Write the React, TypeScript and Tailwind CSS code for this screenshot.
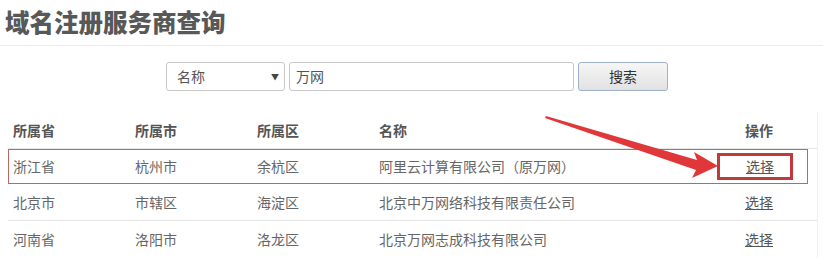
import React from "react";

const rows = [
  ["浙江省", "杭州市", "余杭区", "阿里云计算有限公司（原万网）"],
  ["北京市", "市辖区", "海淀区", "北京中万网络科技有限责任公司"],
  ["河南省", "洛阳市", "洛龙区", "北京万网志成科技有限公司"],
];

export default function App() {
  return (
    <div
      className="relative w-[823px] h-[273px] overflow-hidden bg-white text-[#555]"
      style={{ fontFamily: '"Noto Sans CJK SC", "Microsoft YaHei", sans-serif' }}
    >
      <div className="h-[46px] border-b border-[#ebebeb] pl-[5px] pt-[4px]">
        <h1 className="text-[24.5px] leading-[36px] font-black text-[#585858]">域名注册服务商查询</h1>
      </div>

      <div className="flex items-center pl-[166px] pt-[16px] gap-[4px]">
        <div className="flex h-[29px] w-[119px] items-center justify-between rounded-[3px] border border-[#c8c8c8] pl-[10px] pr-[5px] text-[14px] text-[#555]">
          <span>名称</span>
          <span className="text-[8px] text-[#444]">▼</span>
        </div>
        <div className="flex h-[29px] w-[285px] items-center rounded-[3px] border border-[#c8c8c8] pl-[6px] text-[14px] text-[#555]">
          万网
        </div>
        <div className="flex h-[29px] w-[90px] items-center justify-center rounded-[3px] border border-[#9fb1c9] bg-gradient-to-b from-[#f6f6f6] to-[#e2e2e2] text-[14px] text-[#333]">
          搜索
        </div>
      </div>

      <div className="mt-[21px] ml-[8px] w-[810px] border-r border-[#f0f0f0] text-[14px]">
        <div className="grid h-[37px] grid-cols-[122px_122px_122px_366px_1fr] items-center border-b border-[#e6e6e6] font-bold text-[#555]">
          <div className="pl-[5px]">所属省</div>
          <div className="pl-[5px]">所属市</div>
          <div className="pl-[5px]">所属区</div>
          <div className="pl-[5px]">名称</div>
          <div className="pl-[5px]">操作</div>
        </div>
        {rows.map((r, i) => (
          <div
            key={i}
            className={
              i === 0
                ? "grid h-[35px] w-[800px] grid-cols-[122px_122px_122px_366px_1fr] items-center border border-[#b86a62] text-[#666]"
                : "grid h-[37px] grid-cols-[122px_122px_122px_366px_1fr] items-center border-b border-[#e6e6e6] text-[#666] last:border-b-0"
            }
          >
            <div className={i === 0 ? "pl-[4px]" : "pl-[5px]"}>{r[0]}</div>
            <div className={i === 0 ? "pl-[4px]" : "pl-[5px]"}>{r[1]}</div>
            <div className={i === 0 ? "pl-[4px]" : "pl-[5px]"}>{r[2]}</div>
            <div className={i === 0 ? "pl-[4px]" : "pl-[5px]"}>{r[3]}</div>
            <div className={i === 0 ? "pl-[4px]" : "pl-[5px]"}>
              {i === 0 ? (
                <span className="-ml-[28px] flex h-[27px] w-[76px] items-center border-[3px] border-[#c2393d] pl-[26px]">
                  <span className="underline text-[#555]">选择</span>
                </span>
              ) : (
                <span className="underline text-[#555]">选择</span>
              )}
            </div>
          </div>
        ))}
      </div>

      <svg className="absolute left-0 top-0 pointer-events-none" width="823" height="273">
        <polygon
          points="546,116 697,160 694,152 718,166 692,178 696,170 545,118"
          fill="#e0383a"
        />
      </svg>
    </div>
  );
}
